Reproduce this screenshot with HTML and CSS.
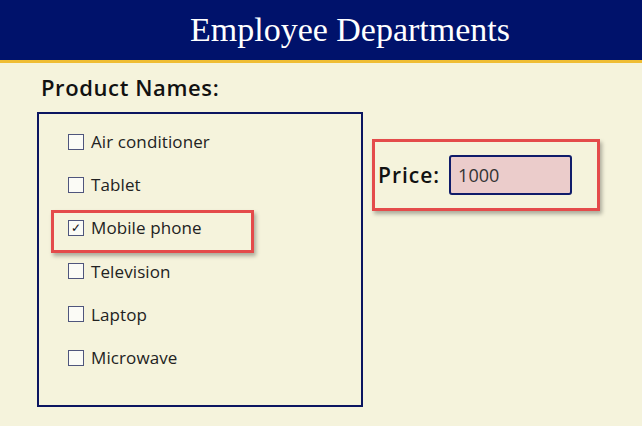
FILE: index.html
```html
<!DOCTYPE html>
<html lang="en">
<head>
    <meta charset="UTF-8">
    <title>Employee Departments</title>
    <link rel="stylesheet" href="styles.css">
</head>
<body>

<header class="topbar">
    <h1>Employee Departments</h1>
</header>

<main class="content">
    <!-- Product list -->
    <section class="products">
        <h2>Product Names:</h2>
        <ul class="product-list">
            <li><span class="check"></span>Air conditioner</li>
            <li><span class="check"></span>Tablet</li>
            <li class="selected"><span class="check checked">&#10003;</span>Mobile phone<span class="mark"></span></li>
            <li><span class="check"></span>Television</li>
            <li><span class="check"></span>Laptop</li>
            <li><span class="check"></span>Microwave</li>
        </ul>
    </section>

    <!-- Price -->
    <section class="price">
        <label for="priceInput">Price:</label>
        <input type="text" id="priceInput" value="1000">
    </section>
</main>

</body>
</html>
```

FILE: styles.css
```css
body {
    margin: 0;
    background: #f5f3dc;
    font-family: "Open Sans", Arial, sans-serif;
    color: #222;
    height: 426px;
}
.topbar {
    height: 60px;
    background: #00126b;
    border-bottom: 3px solid #efbd34;
    display: flex;
    align-items: center;
    justify-content: center;
    padding-left: 58px;
}
.topbar h1 {
    margin: 0;
    font-family: "Liberation Serif", "Times New Roman", serif;
    font-weight: normal;
    font-size: 34px;
    color: #fff;
}
.content {
    display: flex;
    align-items: flex-start;
    padding: 9px 0 0 37px;
}
.products h2 {
    margin: 0 0 10px 4px;
    font-size: 22px;
    font-weight: 600;
    letter-spacing: 0.6px;
    line-height: 30px;
    color: #111;
}
.product-list {
    list-style: none;
    margin: 0;
    padding: 6px 0 0 29px;
    width: 293px;
    height: 285px;
    border: 2px solid #0b1560;
}
.product-list li {
    position: relative;
    display: flex;
    align-items: center;
    height: 43.2px;
    font-size: 17px;
    letter-spacing: 0.1px;
}
.check {
    width: 16px;
    height: 16px;
    box-sizing: border-box;
    border: 1.5px solid #4f557c;
    background: #fbfbf6;
    margin-right: 7px;
    display: flex;
    align-items: center;
    justify-content: center;
    font-size: 12px;
    line-height: 1;
    color: #111;
}
.mark {
    position: absolute;
    left: -17px;
    top: 4px;
    width: 197px;
    height: 37px;
    border: 3px solid #e44b4b;
    box-shadow: 2px 3px 4px rgba(0, 0, 0, 0.3);
}
.price {
    display: flex;
    align-items: center;
    gap: 9px;
    margin: 67px 0 0 9px;
    width: 219px;
    height: 66px;
    padding-left: 3px;
    box-sizing: content-box;
    border: 3px solid #e44b4b;
    box-shadow: 2px 3px 4px rgba(0, 0, 0, 0.3);
}
.price label {
    font-size: 21px;
    font-weight: 600;
    letter-spacing: 1px;
    color: #111;
}
.price input {
    width: 123px;
    height: 40px;
    box-sizing: border-box;
    border: 2px solid #101c6a;
    border-radius: 3px;
    background: #ebcccb;
    padding: 0 0 0 7px;
    font-family: "Open Sans", Arial, sans-serif;
    font-size: 18px;
    color: #333;
}
```
